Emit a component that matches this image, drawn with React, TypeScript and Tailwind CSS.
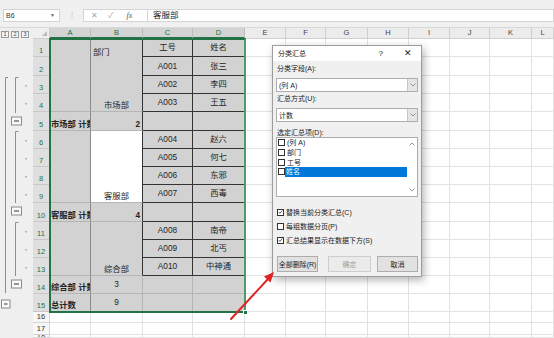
import React from "react";

const restCols = ["E", "F", "G", "H", "I", "J", "K", "L"];
const headCols = ["A", "B", "C", "D"];

const Blank = () => (
  <>
    {restCols.map((c) => (
      <div key={c} className="bg-white border-r border-b border-[#e2e2e2]" />
    ))}
  </>
);

const WhiteRow = () => (
  <>
    {headCols.concat(restCols).map((c) => (
      <div key={c} className="bg-white border-r border-b border-[#e2e2e2]" />
    ))}
  </>
);

const Num = ({ n }: { n: number }) => (
  <div className="bg-[#dfdfdf] border-r border-b border-[#c8c8c8] text-[#217346] text-[7.5px] leading-none flex items-end justify-center pb-[2px]">
    {n}
  </div>
);

const Num2 = ({ n }: { n: number }) => (
  <div className="bg-[#f7f7f7] border-r border-b border-[#d6d6d6] text-[#333] text-[7.5px] leading-none flex items-center justify-center overflow-hidden">
    {n}
  </div>
);

// C / D cells inside the bordered table
const Cell = ({ children }: { children?: React.ReactNode }) => (
  <div className="bg-[#d2d2d2] border-r border-b border-[#343434] flex items-center justify-center leading-none">
    {children}
  </div>
);

const GrayCell = () => (
  <div className="bg-[#d2d2d2] border-r border-b border-[#b5b5b5]" />
);

const TotalLabel = ({ children }: { children: React.ReactNode }) => (
  <div className="bg-[#d2d2d2] border-r border-b border-r-[#8a8a8a] border-b-[#b5b5b5] overflow-hidden whitespace-nowrap font-bold flex items-end pl-[1px] pb-[2px] leading-none">
    {children}
  </div>
);

const Chevron = ({ up }: { up?: boolean }) => (
  <svg width="6" height="4" viewBox="0 0 6 4">
    <polyline
      points={up ? "0.5,3.5 3,1 5.5,3.5" : "0.5,0.5 3,3 5.5,0.5"}
      fill="none"
      stroke="#8a8a8a"
      strokeWidth="0.9"
    />
  </svg>
);

const Box = ({ checked }: { checked?: boolean }) => (
  <div className="w-[7px] h-[7px] border border-[#333] bg-white shrink-0 flex items-center justify-center">
    {checked && (
      <svg width="6" height="6" viewBox="0 0 6 6">
        <polyline points="0.8,3 2.3,4.6 5.2,1.2" fill="none" stroke="#222" strokeWidth="0.9" />
      </svg>
    )}
  </div>
);

const Select = ({ value }: { value: string }) => (
  <div className="h-[14px] bg-white border border-[#adadad] flex items-center">
    <span className="pl-[2px]">{value}</span>
    <div className="ml-auto w-[10px] h-full border-l border-[#c6c6c6] bg-[#e6e6e6] flex items-center justify-center">
      <Chevron />
    </div>
  </div>
);

const Dialog = () => (
  <div className="absolute left-[272px] top-[45px] w-[150px] h-[232px] bg-[#f0f0f0] border border-[#9c9c9c] shadow-[2px_3px_8px_rgba(0,0,0,0.3)] flex flex-col text-[7px] leading-none text-[#1a1a1a]">
    <div className="h-[15px] bg-white flex items-center pl-[5px]">
      <span>分类汇总</span>
      <span className="ml-auto text-[8px]">?</span>
      <span className="ml-[21px] mr-[9px] text-[9px]">✕</span>
    </div>
    <div className="flex flex-col px-[3px]">
      <div className="mt-[2px] h-[10px] flex items-center pl-[1px]">分类字段(A):</div>
      <div className="mt-[5px]">
        <Select value="(列 A)" />
      </div>
      <div className="mt-[1px] h-[10px] flex items-center pl-[1px]">汇总方式(U):</div>
      <div className="mt-[5px]">
        <Select value="计数" />
      </div>
      <div className="mt-[5px] h-[10px] flex items-center pl-[1px]">选定汇总项(D):</div>
      <div className="h-[60px] bg-white border border-[#adadad] flex">
        <div className="flex-1 flex flex-col">
          {["(列 A)", "部门", "工号"].map((t) => (
            <div key={t} className="h-[9.7px] flex items-center pl-[1px]">
              <Box />
              <span className="ml-[2px]">{t}</span>
            </div>
          ))}
          <div className="h-[9.7px] flex items-center pl-[1px]">
            <Box />
            <div className="flex-1 h-full bg-[#0078d7] text-white flex items-center pl-[1px]">姓名</div>
          </div>
        </div>
        <div className="w-[10px] flex flex-col items-center justify-between py-[4px]">
          <Chevron up />
          <Chevron />
        </div>
      </div>
      <div className="mt-[8px] flex flex-col">
        <div className="h-[14px] flex items-center pl-[1px]">
          <Box checked />
          <span className="ml-[2px]">替换当前分类汇总(C)</span>
        </div>
        <div className="h-[14px] flex items-center pl-[1px]">
          <Box />
          <span className="ml-[2px]">每组数据分页(P)</span>
        </div>
        <div className="h-[14px] flex items-center pl-[1px]">
          <Box checked />
          <span className="ml-[2px]">汇总结果显示在数据下方(S)</span>
        </div>
      </div>
      <div className="mt-[9px] h-[16px] flex pl-[1px]">
        <div className="w-[41px] bg-[#e1e1e1] border border-[#adadad] flex items-center justify-center">全部删除(R)</div>
        <div className="ml-[10px] w-[43px] bg-[#ebebeb] border border-[#cdcdcd] text-[#9d9d9d] flex items-center justify-center">确定</div>
        <div className="ml-[6px] w-[41px] bg-[#e1e1e1] border border-[#adadad] flex items-center justify-center">取消</div>
      </div>
    </div>
  </div>
);

const Outline = () => {
  const dots = [46, 64, 101, 119, 137, 155, 192, 210, 228];
  const minus = [
    { x: 1.5, y: 261, w: 8.5 },
    { x: 11.5, y: 78, w: 10 },
    { x: 11.5, y: 168, w: 10 },
    { x: 11.5, y: 241, w: 10 },
  ];
  return (
    <div className="w-[33px] bg-[#efefef] flex flex-col">
      <div className="h-[11px] flex items-center gap-[2px] pl-[1px] pt-[2px]">
        {["1", "2", "3"].map((l) => (
          <div key={l} className="w-[8px] h-[7px] border border-[#9a9a9a] bg-[#f7f7f7] text-[5.5px] leading-none text-[#444] flex items-center justify-center">
            {l}
          </div>
        ))}
      </div>
      <svg width="33" height="299" viewBox="0 0 33 299">
        <g fill="none" stroke="#8e8e8e" strokeWidth="1">
          <path d="M8 38.5 H5.5 V254" />
          <path d="M18.5 38.5 H15.5 V74" />
          <path d="M18.5 92.5 H15.5 V164" />
          <path d="M18.5 183.5 H15.5 V237" />
        </g>
        {dots.map((y) => (
          <rect key={y} x="25.5" y={y} width="1" height="1.5" fill="#7a7a7a" />
        ))}
        {minus.map((m) => (
          <g key={m.y}>
            <rect x={m.x} y={m.y} width={m.w} height="8" fill="#f8f8f8" stroke="#8a8a8a" strokeWidth="1" />
            <line x1={m.x + 2.5} x2={m.x + m.w - 2.5} y1={m.y + 4} y2={m.y + 4} stroke="#333" strokeWidth="1" />
          </g>
        ))}
      </svg>
    </div>
  );
};

const Toolbar = () => (
  <div className="h-[28px] bg-[#f0f0f0] border-b border-[#d8d8d8] flex items-start pt-[9px] text-[#333]">
    <div className="ml-[3px] w-[57px] h-[13px] bg-white border border-[#d4d4d4] flex items-center pl-[2px] text-[7px] leading-none">
      <span>B6</span>
      <span className="ml-auto mr-[4px] text-[5px] text-[#666]">▼</span>
    </div>
    <div className="ml-[8px] mt-[2px] text-[8px] leading-none text-[#aaa]">⋮</div>
    <div className="ml-[7px] flex-1 h-[13px] bg-white border border-[#d4d4d4] flex items-center">
      <div className="w-[64px] h-full flex items-center border-r border-[#d4d4d4] text-[#a6a6a6]">
        <span className="ml-[7px] text-[8px] leading-none">✕</span>
        <span className="ml-[10px] text-[8px] leading-none">✓</span>
        <span className="ml-[13px] text-[8px] leading-none italic font-['Liberation_Serif',serif] text-[#555]">fx</span>
      </div>
      <span className="ml-[5px] text-[8.5px] leading-none text-[#222]">客服部</span>
    </div>
  </div>
);

const Sheet = () => (
  <div className="relative flex-1 grid grid-cols-[17px_41px_52px_50px_52px_41px_40px_42px_41px_41px_40px_42px_1fr] grid-rows-[11px_18px_19px_18px_18px_19px_18px_18px_18px_18px_19px_18px_18px_18px_18px_18px_11px_12px_1fr] text-[8.3px] text-[#242424] overflow-hidden">
    {/* header */}
    <div className="bg-[#efefef] border-r border-b border-[#cfcfcf] flex items-end justify-end pr-[2px] pb-[2px]">
      <svg width="5" height="5" viewBox="0 0 5 5">
        <polygon points="5,0 5,5 0,5" fill="#bdbdbd" />
      </svg>
    </div>
    {headCols.map((c) => (
      <div key={c} className="bg-[#d3d3d3] border-r border-[#bcbcbc] border-b-2 border-b-[#217346] text-[#217346] text-[7.5px] leading-none flex items-center justify-center">
        {c}
      </div>
    ))}
    {restCols.map((c) => (
      <div key={c} className="bg-[#ececec] border-r border-b border-[#d0d0d0] text-[#444] text-[7.5px] leading-none flex items-center justify-center">
        {c}
      </div>
    ))}

    {/* row 1 */}
    <Num n={1} />
    <div className="row-span-4 bg-[#d2d2d2] border-r border-b border-r-[#8a8a8a] border-b-[#b5b5b5]" />
    <div className="row-span-4 bg-[#d2d2d2] border-r border-b border-r-[#343434] border-b-[#b5b5b5] flex flex-col leading-none">
      <div className="h-[18px] flex items-end pl-[2px] pb-[1px]">部门</div>
      <div className="mt-auto text-center pb-[2px]">市场部</div>
    </div>
    <Cell>工号</Cell>
    <Cell>姓名</Cell>
    <Blank />
    {/* row 2-4 */}
    <Num n={2} />
    <Cell>A001</Cell>
    <Cell>张三</Cell>
    <Blank />
    <Num n={3} />
    <Cell>A002</Cell>
    <Cell>李四</Cell>
    <Blank />
    <Num n={4} />
    <Cell>A003</Cell>
    <Cell>王五</Cell>
    <Blank />
    {/* row 5 */}
    <Num n={5} />
    <TotalLabel>市场部 计数</TotalLabel>
    <div className="bg-[#d2d2d2] border-r border-b border-r-[#343434] border-b-[#b5b5b5] font-bold flex items-end justify-end pr-[2px] pb-[2px] leading-none">2</div>
    <Cell />
    <Cell />
    <Blank />
    {/* row 6-9 */}
    <Num n={6} />
    <div className="row-span-4 bg-[#d2d2d2] border-r border-b border-r-[#8a8a8a] border-b-[#b5b5b5]" />
    <div className="row-span-4 bg-white border-r border-b border-r-[#343434] border-b-[#b5b5b5] flex items-end justify-center pb-[2px] leading-none">
      客服部
    </div>
    <Cell>A004</Cell>
    <Cell>赵六</Cell>
    <Blank />
    <Num n={7} />
    <Cell>A005</Cell>
    <Cell>何七</Cell>
    <Blank />
    <Num n={8} />
    <Cell>A006</Cell>
    <Cell>东邪</Cell>
    <Blank />
    <Num n={9} />
    <Cell>A007</Cell>
    <Cell>西毒</Cell>
    <Blank />
    {/* row 10 */}
    <Num n={10} />
    <TotalLabel>客服部 计数</TotalLabel>
    <div className="bg-[#d2d2d2] border-r border-b border-r-[#343434] border-b-[#b5b5b5] font-bold flex items-end justify-end pr-[2px] pb-[2px] leading-none">4</div>
    <Cell />
    <Cell />
    <Blank />
    {/* row 11-13 */}
    <Num n={11} />
    <div className="row-span-3 bg-[#d2d2d2] border-r border-b border-r-[#8a8a8a] border-b-[#b5b5b5]" />
    <div className="row-span-3 bg-[#d2d2d2] border-r border-b border-r-[#343434] border-b-[#b5b5b5] flex items-end justify-center pb-[2px] leading-none">
      综合部
    </div>
    <Cell>A008</Cell>
    <Cell>南帝</Cell>
    <Blank />
    <Num n={12} />
    <Cell>A009</Cell>
    <Cell>北丐</Cell>
    <Blank />
    <Num n={13} />
    <Cell>A010</Cell>
    <Cell>中神通</Cell>
    <Blank />
    {/* row 14 */}
    <Num n={14} />
    <TotalLabel>综合部 计数</TotalLabel>
    <div className="bg-[#d2d2d2] border-r border-b border-[#b5b5b5] flex items-center justify-center leading-none">3</div>
    <GrayCell />
    <GrayCell />
    <Blank />
    {/* row 15 */}
    <Num n={15} />
    <TotalLabel>总计数</TotalLabel>
    <div className="bg-[#d2d2d2] border-r border-b border-[#b5b5b5] flex items-center justify-center leading-none">9</div>
    <GrayCell />
    <GrayCell />
    <Blank />
    {/* rows 16-18 */}
    <Num2 n={16} />
    <WhiteRow />
    <Num2 n={17} />
    <WhiteRow />
    <Num2 n={18} />
    <WhiteRow />

    {/* selection outline A1:D15 */}
    <div className="absolute left-[16px] top-[10px] w-[197px] h-[275px] border-2 border-[#217346] border-r-[#4f9a6c] pointer-events-none">
      <div className="absolute -right-[4px] -bottom-[4px] w-[5px] h-[5px] bg-[#217346] border border-white" />
    </div>
  </div>
);

export default function App() {
  return (
    <div className="relative w-[554px] h-[338px] overflow-hidden bg-white flex flex-col font-['Liberation_Sans','Noto_Sans_CJK_SC',sans-serif]">
      <Toolbar />
      <div className="flex flex-1 min-h-0">
        <Outline />
        <Sheet />
      </div>
      <Dialog />
      <svg className="absolute inset-0 pointer-events-none" width="554" height="338" viewBox="0 0 554 338">
        <line x1="231" y1="319" x2="268" y2="279" stroke="#e02424" strokeWidth="2" strokeLinecap="round" />
        <polygon points="274,272 270.5,282.5 264,276.5" fill="#e02424" />
      </svg>
    </div>
  );
}
